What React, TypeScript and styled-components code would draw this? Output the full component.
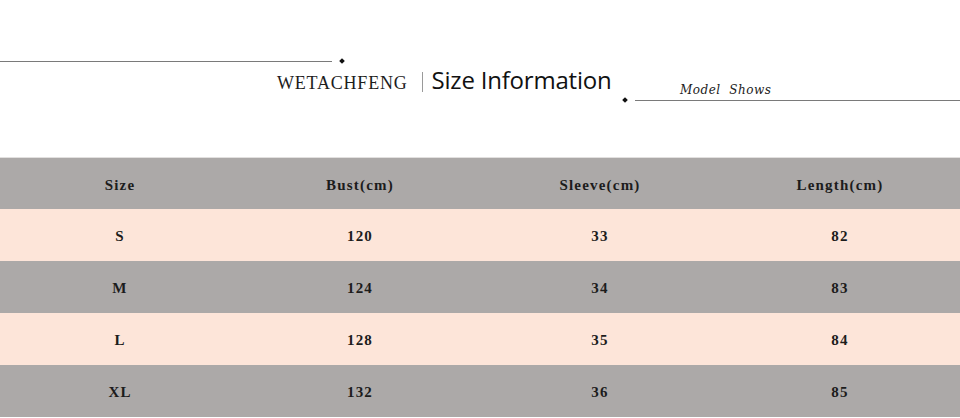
import React from "react";
import styled, { createGlobalStyle } from "styled-components";

const GlobalStyle = createGlobalStyle`
	html, body {
		margin: 0;
		padding: 0;
		background: #ffffff;
	}
	body {
		width: 960px;
		height: 418px;
		overflow: hidden;
	}
`;

const COLUMNS = ["Size", "Bust(cm)", "Sleeve(cm)", "Length(cm)"];

const ROWS: string[][] = [
	["S", "120", "33", "82"],
	["M", "124", "34", "83"],
	["L", "128", "35", "84"],
	["XL", "132", "36", "85"],
];

const Page = styled.div`
	width: 960px;
	height: 418px;
	display: flex;
	flex-direction: column;
	background: #fff;
`;

const Heading = styled.header`
	height: 157px;
	display: flex;
	flex-direction: column;
	box-sizing: border-box;
	padding-top: 59px;
`;

const RuleRow = styled.div<{ $indent?: number; $width?: number; $gap?: number }>`
	display: flex;
	align-items: center;
	gap: 8px;
	padding-left: ${(p) => p.$indent ?? 0}px;
	margin-top: ${(p) => p.$gap ?? 0}px;
	width: ${(p) => (p.$width ? `${p.$width}px` : "auto")};
`;

const Line = styled.div`
	flex: 1;
	height: 1px;
	background: #7a7a7a;
`;

const Diamond = styled.span`
	width: 4px;
	height: 4px;
	background: #111;
	transform: rotate(45deg);
	flex: none;
`;

const TitleRow = styled.div`
	display: flex;
	align-items: center;
	padding-left: 277px;
	margin-top: 4px;
	height: 26px;
`;

const Brand = styled.span`
	font-family: "Liberation Serif", serif;
	font-size: 18px;
	letter-spacing: 0.8px;
	color: #1d1d1d;
	margin-top: 6px;
`;

const Divider = styled.span`
	width: 1px;
	height: 20px;
	background: #9a9a9a;
	margin: 4px 9px 0 14px;
`;

const Title = styled.h1`
	margin: 0;
	font-family: "Open Sans", sans-serif;
	font-weight: 400;
	font-size: 24px;
	color: #111;
	line-height: 26px;
	letter-spacing: -0.2px;
`;

const CaptionLine = styled.div`
	flex: 1;
	position: relative;
	height: 1px;
	background: #7a7a7a;
`;

const Caption = styled.span`
	position: absolute;
	left: 45px;
	bottom: 4px;
	font-family: "DejaVu Serif", serif;
	font-style: italic;
	font-size: 12px;
	letter-spacing: 0.5px;
	color: #222;
	white-space: nowrap;
`;

const Table = styled.div`
	border-top: 1px solid #e2e0df;
	display: flex;
	flex-direction: column;
`;

const Row = styled.div<{ $tone: "gray" | "peach"; $height: number }>`
	display: grid;
	grid-template-columns: repeat(4, 240px);
	height: ${(p) => p.$height}px;
	align-items: center;
	background: ${(p) => (p.$tone === "gray" ? "#aca9a8" : "#fde5d9")};
`;

const Cell = styled.div`
	text-align: center;
	padding-top: 3px;
	font-family: "Liberation Serif", serif;
	font-weight: 700;
	font-size: 15px;
	letter-spacing: 1.2px;
	color: #1c1c1c;
`;

export default function App() {
	return (
		<Page>
			<GlobalStyle />
			<Heading>
				<RuleRow $width={344}>
					<Line />
					<Diamond />
				</RuleRow>
				<TitleRow>
					<Brand>WETACHFENG</Brand>
					<Divider />
					<Title>Size Information</Title>
				</TitleRow>
				<RuleRow $indent={623} $gap={5}>
					<Diamond />
					<CaptionLine>
						<Caption>Model&nbsp;&nbsp;Shows</Caption>
					</CaptionLine>
				</RuleRow>
			</Heading>
			<Table>
				<Row $tone="gray" $height={51}>
					{COLUMNS.map((c) => (
						<Cell key={c}>{c}</Cell>
					))}
				</Row>
				{ROWS.map((r, i) => (
					<Row key={r[0]} $tone={i % 2 === 0 ? "peach" : "gray"} $height={52}>
						{r.map((v, j) => (
							<Cell key={j}>{v}</Cell>
						))}
					</Row>
				))}
			</Table>
		</Page>
	);
}
